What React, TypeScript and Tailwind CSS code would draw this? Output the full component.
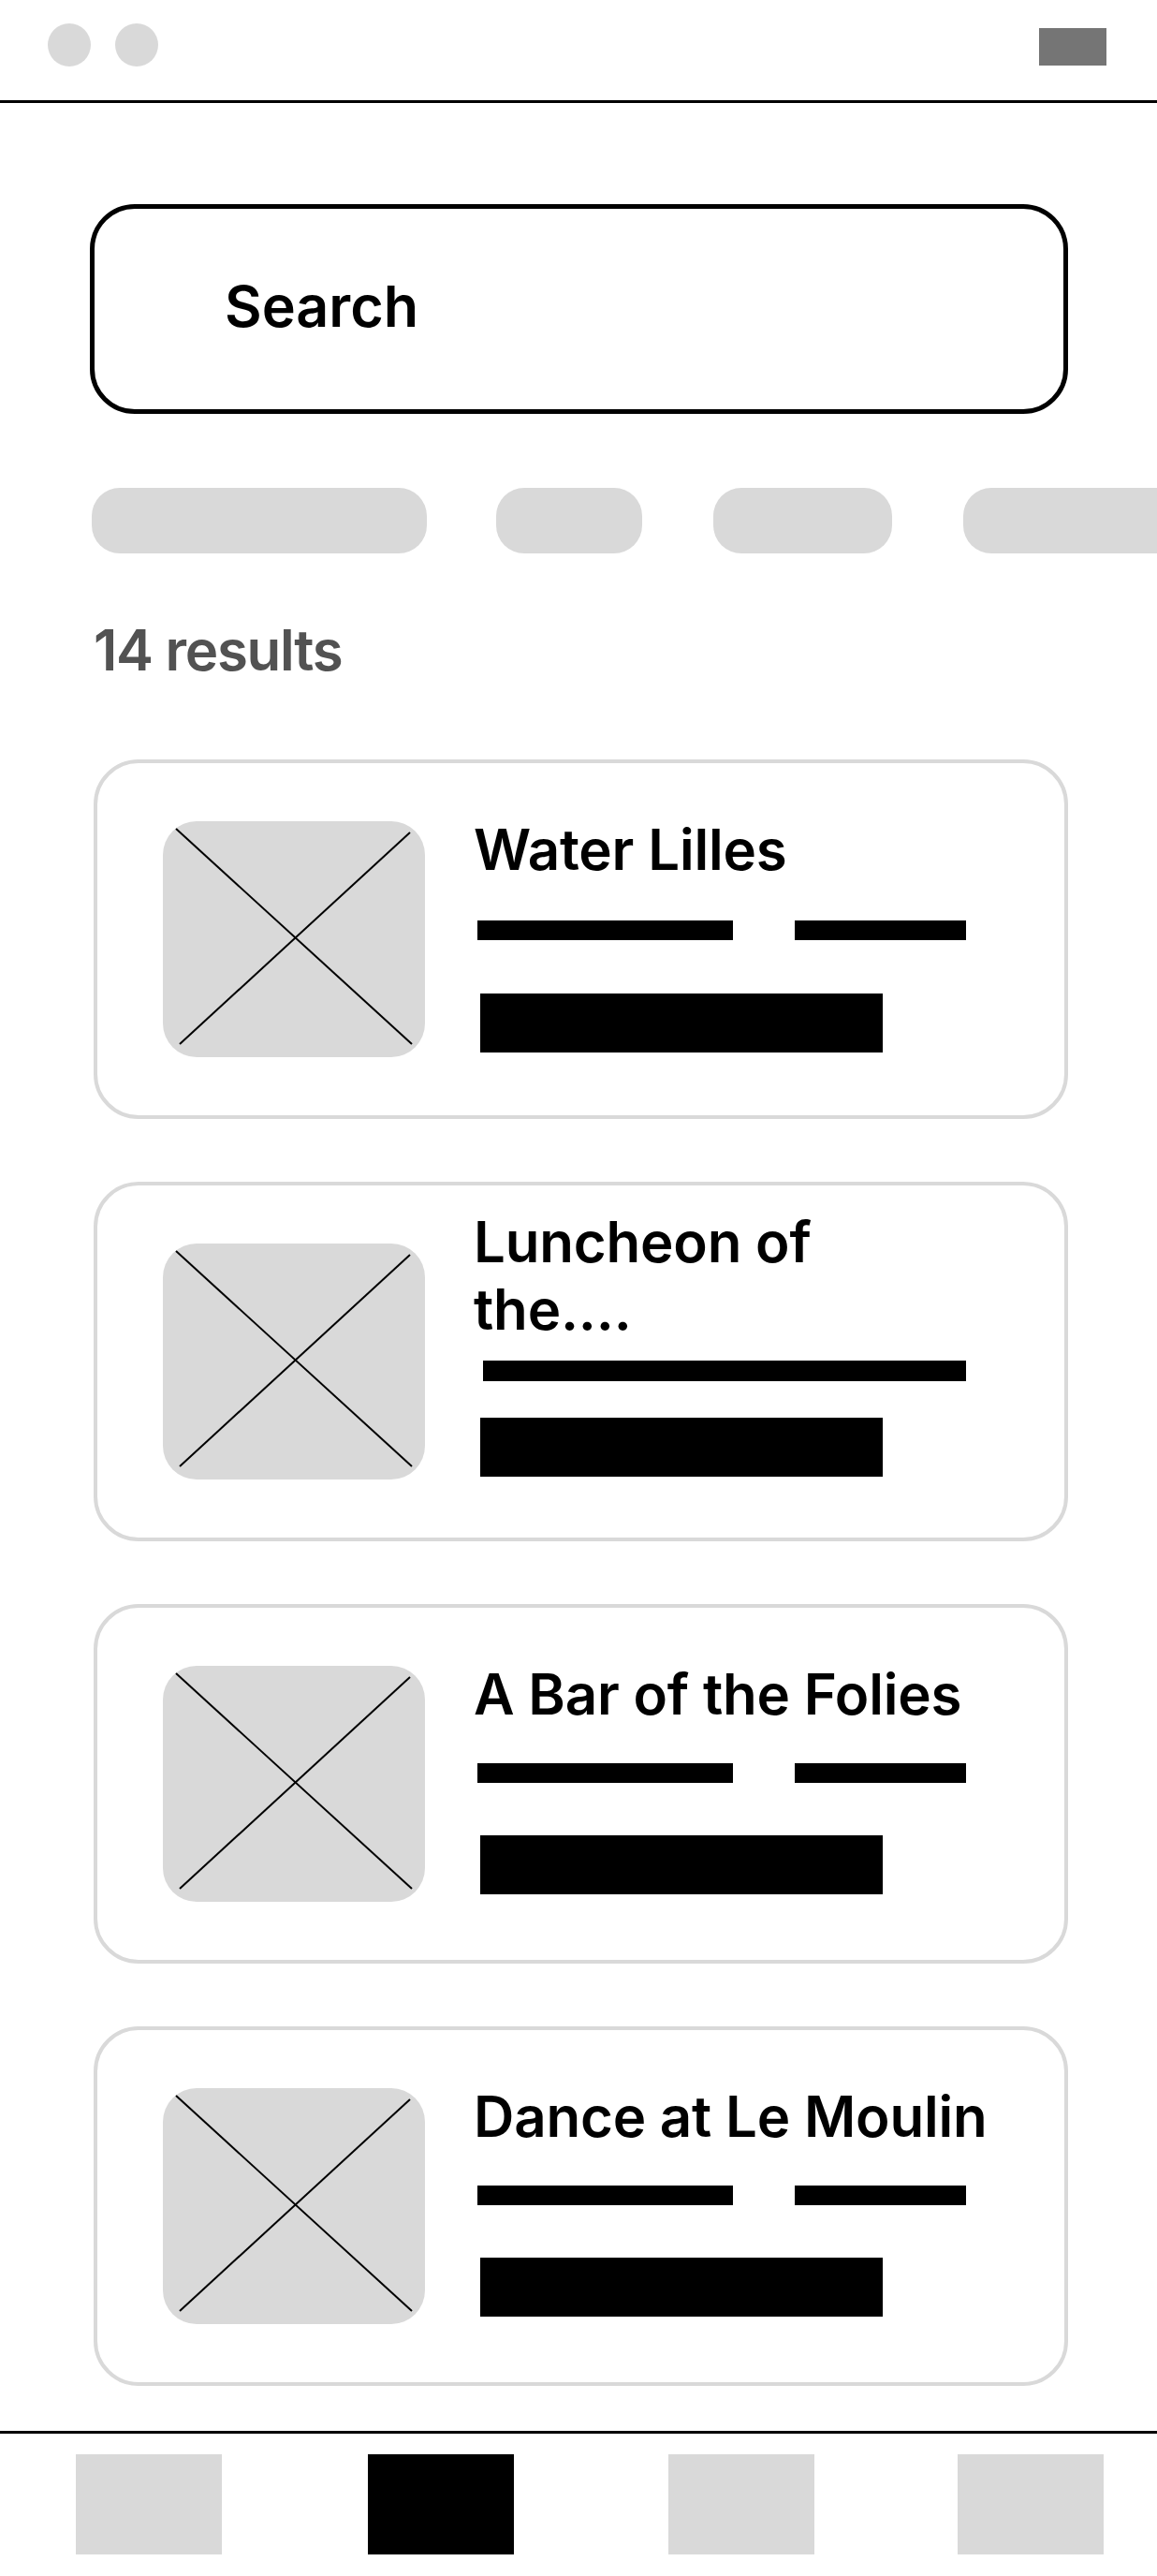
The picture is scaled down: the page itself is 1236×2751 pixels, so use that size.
const cards = [
  { title: ['Water Lilles'], split: true, pt: 'pt-[56px]', barGap: 'mt-[40px]', bigGap: 'mt-[57px]' },
  { title: ['Luncheon of', 'the....'], split: false, pt: 'pt-[24px]', barGap: 'mt-[19px]', bigGap: 'mt-[39px]' },
  { title: ['A Bar of the Folies'], split: true, pt: 'pt-[56px]', barGap: 'mt-[38px]', bigGap: 'mt-[56px]' },
  { title: ['Dance at Le Moulin'], split: true, pt: 'pt-[56px]', barGap: 'mt-[38px]', bigGap: 'mt-[56px]' },
];

function Placeholder() {
  return (
    <div className="relative w-[280px] h-[252px] shrink-0 self-center rounded-[36px] bg-[#d9d9d9]">
      <svg className="absolute inset-0 overflow-visible" width="280" height="252" viewBox="0 0 280 252">
        <line x1="14" y1="8" x2="266" y2="238" stroke="#000" strokeWidth="2" />
        <line x1="264" y1="12" x2="18" y2="238" stroke="#000" strokeWidth="2" />
      </svg>
    </div>
  );
}

function ResultCard({ card }: { card: (typeof cards)[number] }) {
  return (
    <div className="flex items-start h-[384px] rounded-[48px] border-4 border-[#d9d9d9] pl-[70px]">
      <Placeholder />
      <div className={`flex flex-col ml-[52px] ${card.pt}`}>
        <h3 className="text-[60px] leading-[72px] font-semibold text-black tracking-[-0.2px]">
          {card.title.map((line, i) => (
            <span key={i} className="block whitespace-nowrap">{line}</span>
          ))}
        </h3>
        {card.split ? (
          <div className={`flex ${card.barGap} ml-[4px]`}>
            <div className="w-[273px] h-[21px] bg-black" />
            <div className="w-[183px] h-[21px] bg-black ml-[66px]" />
          </div>
        ) : (
          <div className={`w-[516px] h-[22px] bg-black ml-[10px] ${card.barGap}`} />
        )}
        <div className={`w-[430px] h-[63px] bg-black ml-[7px] ${card.bigGap}`} />
      </div>
    </div>
  );
}

export default function App() {
  return (
    <div className="w-[1236px] h-[2751px] bg-white overflow-hidden flex flex-col" style={{ fontFamily: 'Inter, "Noto Sans", sans-serif' }}>
      {/* top bar */}
      <header className="h-[110px] shrink-0 flex items-start justify-between border-b-[3px] border-black pl-[51px] pr-[54px]">
        <div className="flex gap-[26px] mt-[25px]">
          <div className="w-[46px] h-[46px] rounded-full bg-[#d9d9d9]" />
          <div className="w-[46px] h-[46px] rounded-full bg-[#d9d9d9]" />
        </div>
        <div className="w-[72px] h-[40px] bg-[#757575] mt-[30px]" />
      </header>

      <main className="flex-1 pl-[96px] pr-[95px]">
        <div className="mt-[108px] h-[224px] rounded-[48px] border-[5px] border-black flex items-center pl-[139px] pb-[6px]">
          <span className="text-[61px] leading-[72px] font-semibold text-black">Search</span>
        </div>

        <div className="mt-[79px] -mr-[95px] flex gap-[74px] overflow-hidden pl-[2px]">
          <div className="w-[358px] h-[70px] shrink-0 rounded-[30px] bg-[#d9d9d9]" />
          <div className="w-[156px] h-[70px] shrink-0 rounded-[30px] bg-[#d9d9d9]" />
          <div className="w-[191px] h-[70px] shrink-0 rounded-[30px] bg-[#d9d9d9] ml-[2px]" />
          <div className="w-[300px] h-[70px] shrink-0 rounded-[30px] bg-[#d9d9d9] ml-[2px]" />
        </div>

        <p className="mt-[67px] text-[60px] leading-[72px] font-semibold text-[#525252] pl-[4px] tracking-[-1.3px]">14 results</p>

        <div className="mt-[81px] flex flex-col gap-[67px] pl-[4px]">
          {cards.map((c, i) => (
            <ResultCard key={i} card={c} />
          ))}
        </div>
      </main>

      {/* bottom nav */}
      <nav className="h-[155px] shrink-0 border-t-[3px] border-black flex pl-[81px] pt-[22px]">
        <div className="w-[156px] h-[107px] bg-[#d9d9d9]" />
        <div className="w-[156px] h-[107px] bg-black ml-[156px]" />
        <div className="w-[156px] h-[107px] bg-[#d9d9d9] ml-[165px]" />
        <div className="w-[156px] h-[107px] bg-[#d9d9d9] ml-[153px]" />
      </nav>
    </div>
  );
}
